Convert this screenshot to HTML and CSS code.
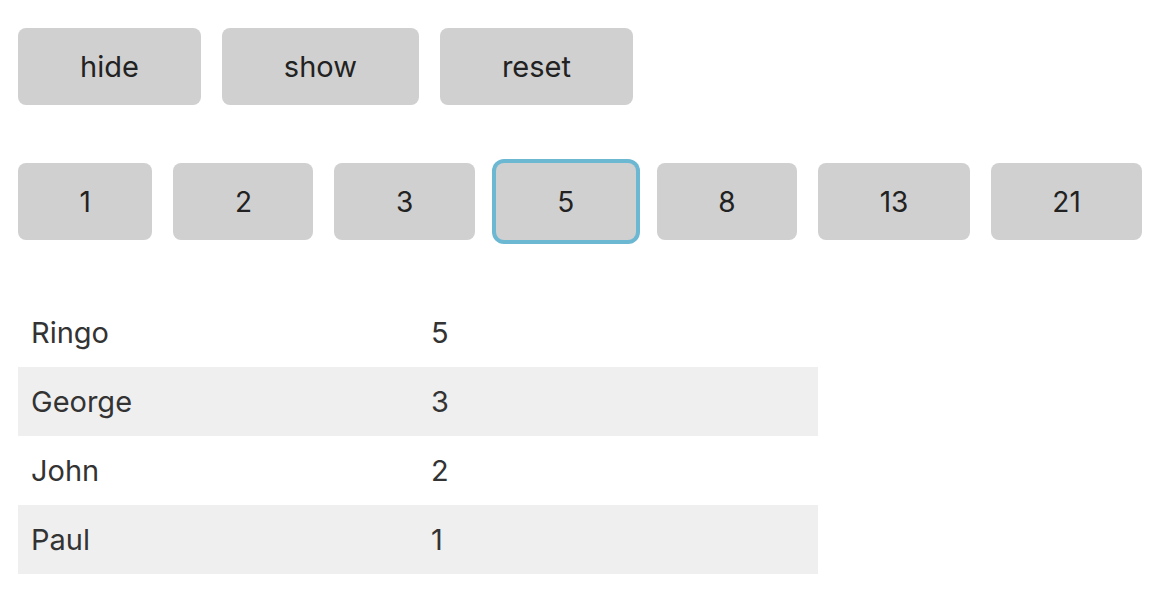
FILE: index.html
```html
<!DOCTYPE html>
<html>
<head>
<meta charset="utf-8">
<link rel="stylesheet" href="styles.css">
</head>
<body>
<div class="page">
  <div class="row">
    <button class="btn">hide</button>
    <button class="btn">show</button>
    <button class="btn">reset</button>
  </div>
  <div class="row">
    <button class="btn num">1</button>
    <button class="btn num">2</button>
    <button class="btn num">3</button>
    <button class="btn num focus">5</button>
    <button class="btn num">8</button>
    <button class="btn num">13</button>
    <button class="btn num">21</button>
  </div>
  <table class="tbl">
    <tr><td>Ringo</td><td>5</td></tr>
    <tr><td>George</td><td>3</td></tr>
    <tr><td>John</td><td>2</td></tr>
    <tr><td>Paul</td><td>1</td></tr>
  </table>
</div>
</body>
</html>
```
FILE: styles.css
```css
html, body { margin: 0; padding: 0; background: #fff; }
.page {
  padding: 28px 18px;
  font-family: Inter, "Noto Sans", sans-serif;
}
.row {
  display: flex;
  gap: 21px;
  margin-bottom: 58px;
}
.btn {
  height: 77px;
  padding: 0 62px;
  border: none;
  border-radius: 8px;
  background: #d0d0d0;
  color: #222;
  font-family: Inter, "Noto Sans", sans-serif;
  font-size: 29px;
}
.btn.num {
  font-size: 28px;
  padding: 0 61.5px;
}
.btn.focus {
  box-shadow: 0 0 0 4px #6cb7d2;
}
.tbl {
  border-collapse: collapse;
  width: 800px;
  font-size: 29px;
  color: #333;
}
.tbl td {
  height: 69px;
  width: 50%;
  padding: 0 13px;
}
.tbl tr:nth-child(even) td { background: #efefef; }
```
